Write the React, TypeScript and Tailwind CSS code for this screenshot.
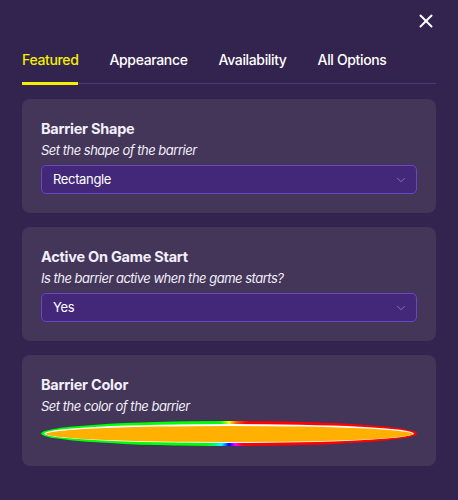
import { X, ChevronDown } from 'lucide-react'

const tabs = ['Featured', 'Appearance', 'Availability', 'All Options']

function Select({ value }: { value: string }) {
  return (
    <div className="mt-[5px] flex h-[29px] items-center justify-between rounded-[5px] border border-[#6a45c8] bg-[#43287a] pl-[11px] pr-[8px]">
      <span className="text-[13px] tracking-[-0.35px] text-white">{value}</span>
      <ChevronDown className="h-[14px] w-[14px] text-[#8f78c4]" strokeWidth={1.5} />
    </div>
  )
}

function Card({
  title,
  subtitle,
  children,
}: {
  title: string
  subtitle: string
  children: React.ReactNode
}) {
  return (
    <div className="rounded-[8px] bg-[#433659] px-[19px] pt-[20px] pb-[19px]">
      <div className="text-[14.5px] font-bold leading-[20px] tracking-[-0.25px] text-[#f2eefa]">{title}</div>
      <div className="mt-[1px] text-[13px] italic leading-[20px] tracking-[-0.5px] text-[#f2eefa]">{subtitle}</div>
      {children}
    </div>
  )
}

export default function App() {
  return (
    <div
      className="h-[500px] w-[458px] overflow-hidden bg-[#33234f] px-[22px] pt-[10px]"
      style={{ fontFamily: 'Inter, "Liberation Sans", sans-serif' }}
    >
      <div className="flex justify-end">
        <X className="mr-[-1px] h-[22px] w-[22px] text-white" strokeWidth={2.2} />
      </div>
      <div className="mt-[17px] flex gap-[31px] border-b border-[#4a3a78]">
        {tabs.map((t, i) => (
          <div
            key={t}
            className={
              i === 0
                ? 'mb-[-2px] border-b-[3px] border-[#f5f000] pb-[9px] text-[14px] font-medium leading-[22px] tracking-[-0.35px] text-[#f5f000]'
                : 'pb-[12px] text-[14px] font-medium leading-[22px] tracking-[-0.35px] text-white'
            }
          >
            {t}
          </div>
        ))}
      </div>
      <div className="mt-[15px] flex flex-col gap-[14px]">
        <Card title="Barrier Shape" subtitle="Set the shape of the barrier">
          <Select value="Rectangle" />
        </Card>
        <Card title="Active On Game Start" subtitle="Is the barrier active when the game starts?">
          <Select value="Yes" />
        </Card>
        <div className="rounded-[8px] bg-[#433659] px-[19px] pt-[20px] pb-[20px]">
          <div className="text-[14.5px] font-bold leading-[20px] tracking-[-0.25px] text-[#f2eefa]">Barrier Color</div>
          <div className="mt-[1px] text-[13px] italic leading-[20px] tracking-[-0.5px] text-[#f2eefa]">
            Set the color of the barrier
          </div>
          <div
            className="mt-[5px] h-[25px] rounded-[50%] p-[3px]"
            style={{
              background:
                'conic-gradient(#ffff00 0deg, #ff6000 35deg, #ff0000 60deg, #ff0000 125deg, #ff00ff 150deg, #0000ff 180deg, #00ffff 215deg, #00ff00 245deg, #00ff00 320deg, #ffff00 360deg)',
            }}
          >
            <div className="h-full w-full rounded-[50%] bg-white p-[1.5px]">
              <div className="h-full w-full rounded-[50%] bg-[#ffb000]" />
            </div>
          </div>
        </div>
      </div>
    </div>
  )
}
